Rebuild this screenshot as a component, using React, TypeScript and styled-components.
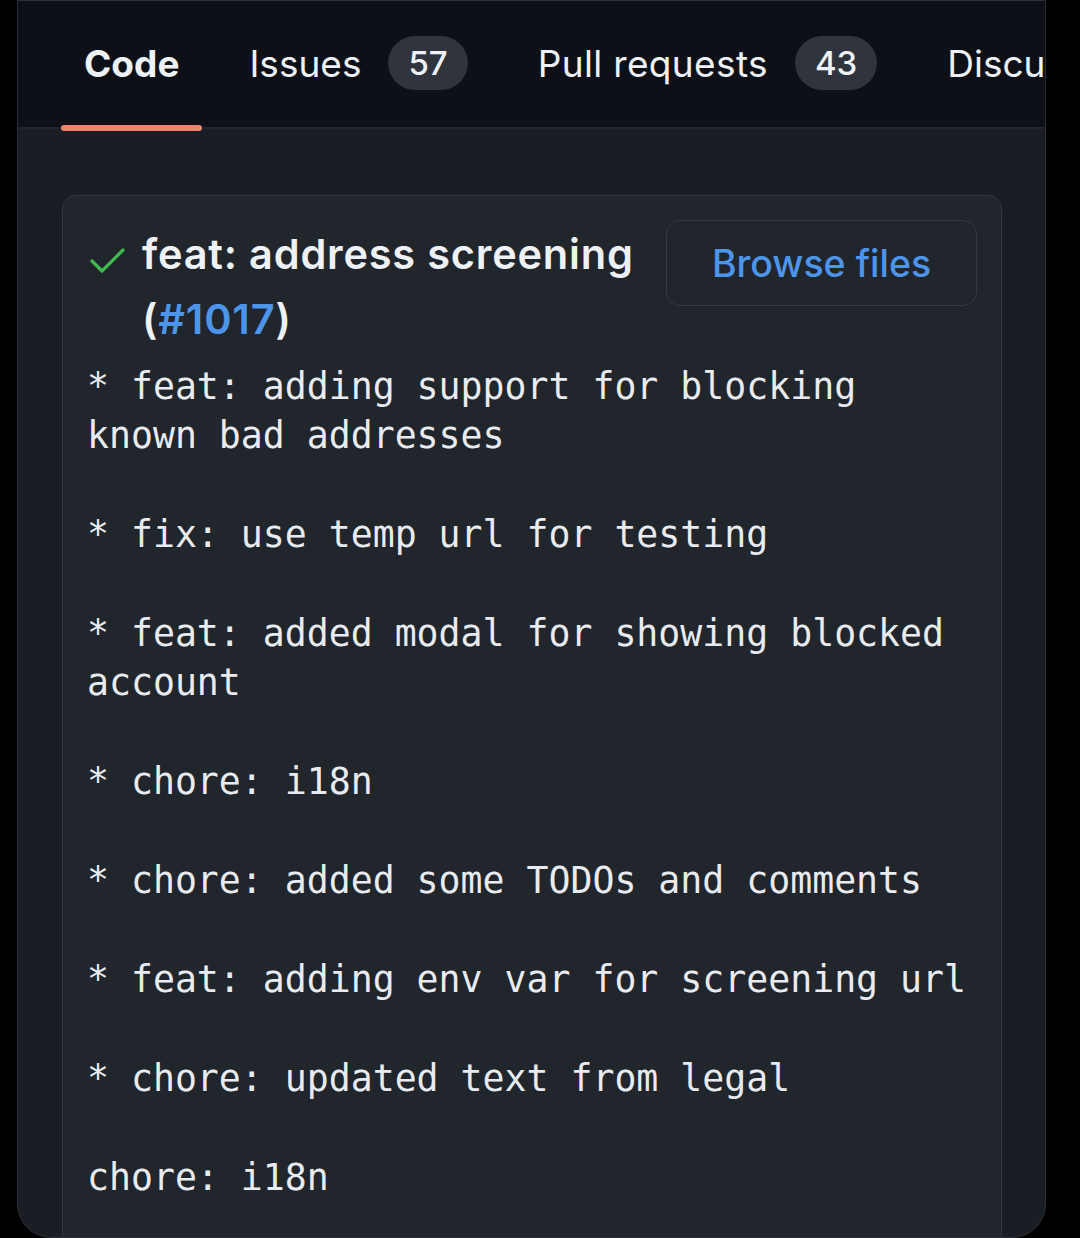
import React from "react";
import styled, { createGlobalStyle } from "styled-components";

const Global = createGlobalStyle`
  html, body { margin: 0; padding: 0; background: #000; }
  body { font-family: Inter, "Noto Sans", sans-serif; -webkit-font-smoothing: antialiased; }
`;

const Page = styled.div`
  width: 1080px;
  height: 1238px;
  background: #000;
  overflow: hidden;
`;

const Panel = styled.div`
  margin-left: 17px;
  width: 1029px;
  height: 1238px;
  box-sizing: border-box;
  background: #191d24;
  border: 1px solid #2b3038;
  border-radius: 0 0 34px 34px;
  overflow: hidden;
  display: flex;
  flex-direction: column;
`;

const TabBar = styled.nav`
  height: 128px;
  flex: none;
  box-sizing: border-box;
  background: #0d1117;
  border-bottom: 2px solid #21262d;
  display: flex;
  align-items: stretch;
  gap: 24px;
  padding-left: 43px;
  white-space: nowrap;
`;

const Tab = styled.div<{ $active?: boolean }>`
  position: relative;
  display: flex;
  align-items: center;
  padding: 0 23px 2px;
  font-size: 37px;
  font-weight: ${(p) => (p.$active ? 700 : 400)};
  color: #eef1f5;
  &::after {
    content: "";
    display: ${(p) => (p.$active ? "block" : "none")};
    position: absolute;
    left: 0;
    right: 0;
    bottom: -4px;
    height: 6px;
    border-radius: 3px;
    background: #f0836d;
  }
`;

const TabLabel = styled.span<{ $spacing?: number }>`
  letter-spacing: ${(p) => p.$spacing ?? 0}px;
`;

const Count = styled.span`
  margin-left: 27px;
  height: 54px;
  padding: 0 20px;
  border-radius: 27px;
  background: #30353d;
  display: inline-flex;
  align-items: center;
  font-size: 33px;
  font-weight: 500;
  color: #eef1f5;
`;

const Content = styled.main`
  padding: 66px 43px 0 44px;
  flex: 1;
`;

const Card = styled.section`
  box-sizing: border-box;
  border: 1.5px solid #30363d;
  border-radius: 14px;
  background: #21252c;
  padding: 24px 24px 40px 25px;
  min-height: 1200px;
`;

const Header = styled.div`
  display: flex;
  align-items: flex-start;
  gap: 22px;
`;

const TitleRow = styled.div`
  flex: 1;
  display: flex;
  align-items: flex-start;
  gap: 16px;
`;

const CheckIcon = styled.svg`
  flex: none;
  margin-top: 28px;
  margin-left: 2px;
`;

const Title = styled.h1`
  margin: 2px 0 0;
  font-size: 41.5px;
  line-height: 65px;
  font-weight: 600;
  color: #eef1f5;
  letter-spacing: 0.8px;
`;

const Link = styled.span`
  color: #4d95ea;
`;

const Button = styled.div`
  flex: none;
  width: 311px;
  height: 86px;
  box-sizing: border-box;
  border: 1.5px solid #353a43;
  border-radius: 14px;
  background: #21252c;
  display: flex;
  align-items: center;
  justify-content: center;
  font-size: 37.5px;
  font-weight: 500;
  color: #4d95ea;
`;

const Body = styled.pre`
  margin: 10px 0 0 -1px;
  font-family: "DejaVu Sans Mono", "Liberation Mono", monospace;
  font-size: 36.5px;
  line-height: 49.4px;
  color: #e8ebef;
  white-space: pre;
`;

const message = [
  "* feat: adding support for blocking",
  "known bad addresses",
  "",
  "* fix: use temp url for testing",
  "",
  "* feat: added modal for showing blocked",
  "account",
  "",
  "* chore: i18n",
  "",
  "* chore: added some TODOs and comments",
  "",
  "* feat: adding env var for screening url",
  "",
  "* chore: updated text from legal",
  "",
  "chore: i18n",
].join("\n");

export default function App() {
  return (
    <Page>
      <Global />
      <Panel>
        <TabBar>
          <Tab $active>Code</Tab>
          <Tab>
            Issues<Count>57</Count>
          </Tab>
          <Tab>
            <TabLabel $spacing={0.35}>Pull requests</TabLabel>
            <Count>43</Count>
          </Tab>
          <Tab>Discussions</Tab>
        </TabBar>
        <Content>
          <Card>
            <Header>
              <TitleRow>
                <CheckIcon width="36" height="26" viewBox="0 0 36 26">
                  <polyline
                    points="2,13 12,23 33,2"
                    fill="none"
                    stroke="#3fb950"
                    strokeWidth="3.2"
                    strokeLinecap="round"
                    strokeLinejoin="round"
                  />
                </CheckIcon>
                <Title>
                  feat: address screening (<Link>#1017</Link>)
                </Title>
              </TitleRow>
              <Button>Browse files</Button>
            </Header>
            <Body>{message}</Body>
          </Card>
        </Content>
      </Panel>
    </Page>
  );
}
